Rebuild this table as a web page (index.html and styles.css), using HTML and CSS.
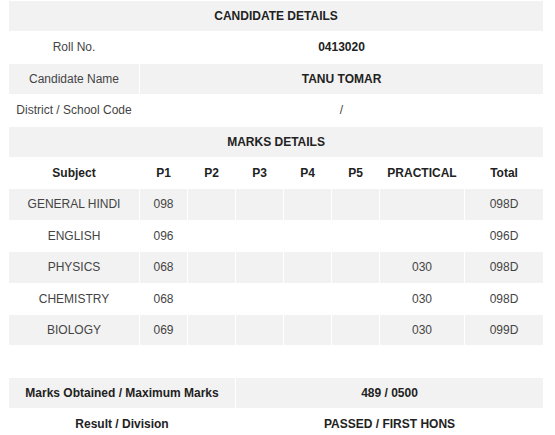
FILE: index.html
```html
<!DOCTYPE html>
<html>
<head>
<meta charset="utf-8">
<title>Result</title>
<link rel="stylesheet" href="styles.css">
</head>
<body>
<div class="wrap">
<table class="result">
  <colgroup>
    <col class="c-subj"><col class="c-p"><col class="c-p"><col class="c-p"><col class="c-p"><col class="c-p"><col class="c-prac"><col class="c-total">
  </colgroup>
  <tbody>
    <tr class="grey"><th colspan="8">CANDIDATE DETAILS</th></tr>
    <tr><td>Roll No.</td><th colspan="7">0413020</th></tr>
    <tr class="grey"><td>Candidate Name</td><th colspan="7">TANU TOMAR</th></tr>
    <tr><td>District / School Code</td><td colspan="7">/</td></tr>
    <tr class="grey"><th colspan="8">MARKS DETAILS</th></tr>
    <tr><th>Subject</th><th>P1</th><th>P2</th><th>P3</th><th>P4</th><th>P5</th><th>PRACTICAL</th><th>Total</th></tr>
    <tr class="grey"><td>GENERAL HINDI</td><td>098</td><td></td><td></td><td></td><td></td><td></td><td>098D</td></tr>
    <tr><td>ENGLISH</td><td>096</td><td></td><td></td><td></td><td></td><td></td><td>096D</td></tr>
    <tr class="grey"><td>PHYSICS</td><td>068</td><td></td><td></td><td></td><td></td><td>030</td><td>098D</td></tr>
    <tr><td>CHEMISTRY</td><td>068</td><td></td><td></td><td></td><td></td><td>030</td><td>098D</td></tr>
    <tr class="grey"><td>BIOLOGY</td><td>069</td><td></td><td></td><td></td><td></td><td>030</td><td>099D</td></tr>
    <tr><td colspan="8">&nbsp;</td></tr>
    <tr class="grey"><th colspan="3">Marks Obtained / Maximum Marks</th><th colspan="5">489 / 0500</th></tr>
    <tr><th colspan="3">Result / Division</th><th colspan="5">PASSED / FIRST HONS</th></tr>
  </tbody>
</table>
</div>
</body>
</html>
```

FILE: styles.css
```css
html, body {
  margin: 0;
  padding: 0;
  background: #fff;
}
.wrap {
  padding-left: 8px;
}
.result {
  width: 536px;
  table-layout: fixed;
  border-collapse: collapse;
  font-family: "Liberation Sans", Arial, sans-serif;
  font-size: 12px;
  line-height: 14.4px;
  color: #333;
}
.c-subj { width: 131px; }
.c-p { width: 48px; }
.c-prac { width: 85px; }
.c-total { width: 79px; }
.result td, .result th {
  padding: 8px 4px;
  border: 1px solid #fff;
  text-align: center;
  white-space: nowrap;
}
.result th {
  font-weight: bold;
  color: #222;
}
.result td {
  color: #444;
}
.result tr.grey td, .result tr.grey th {
  background: #f2f2f2;
}
```
